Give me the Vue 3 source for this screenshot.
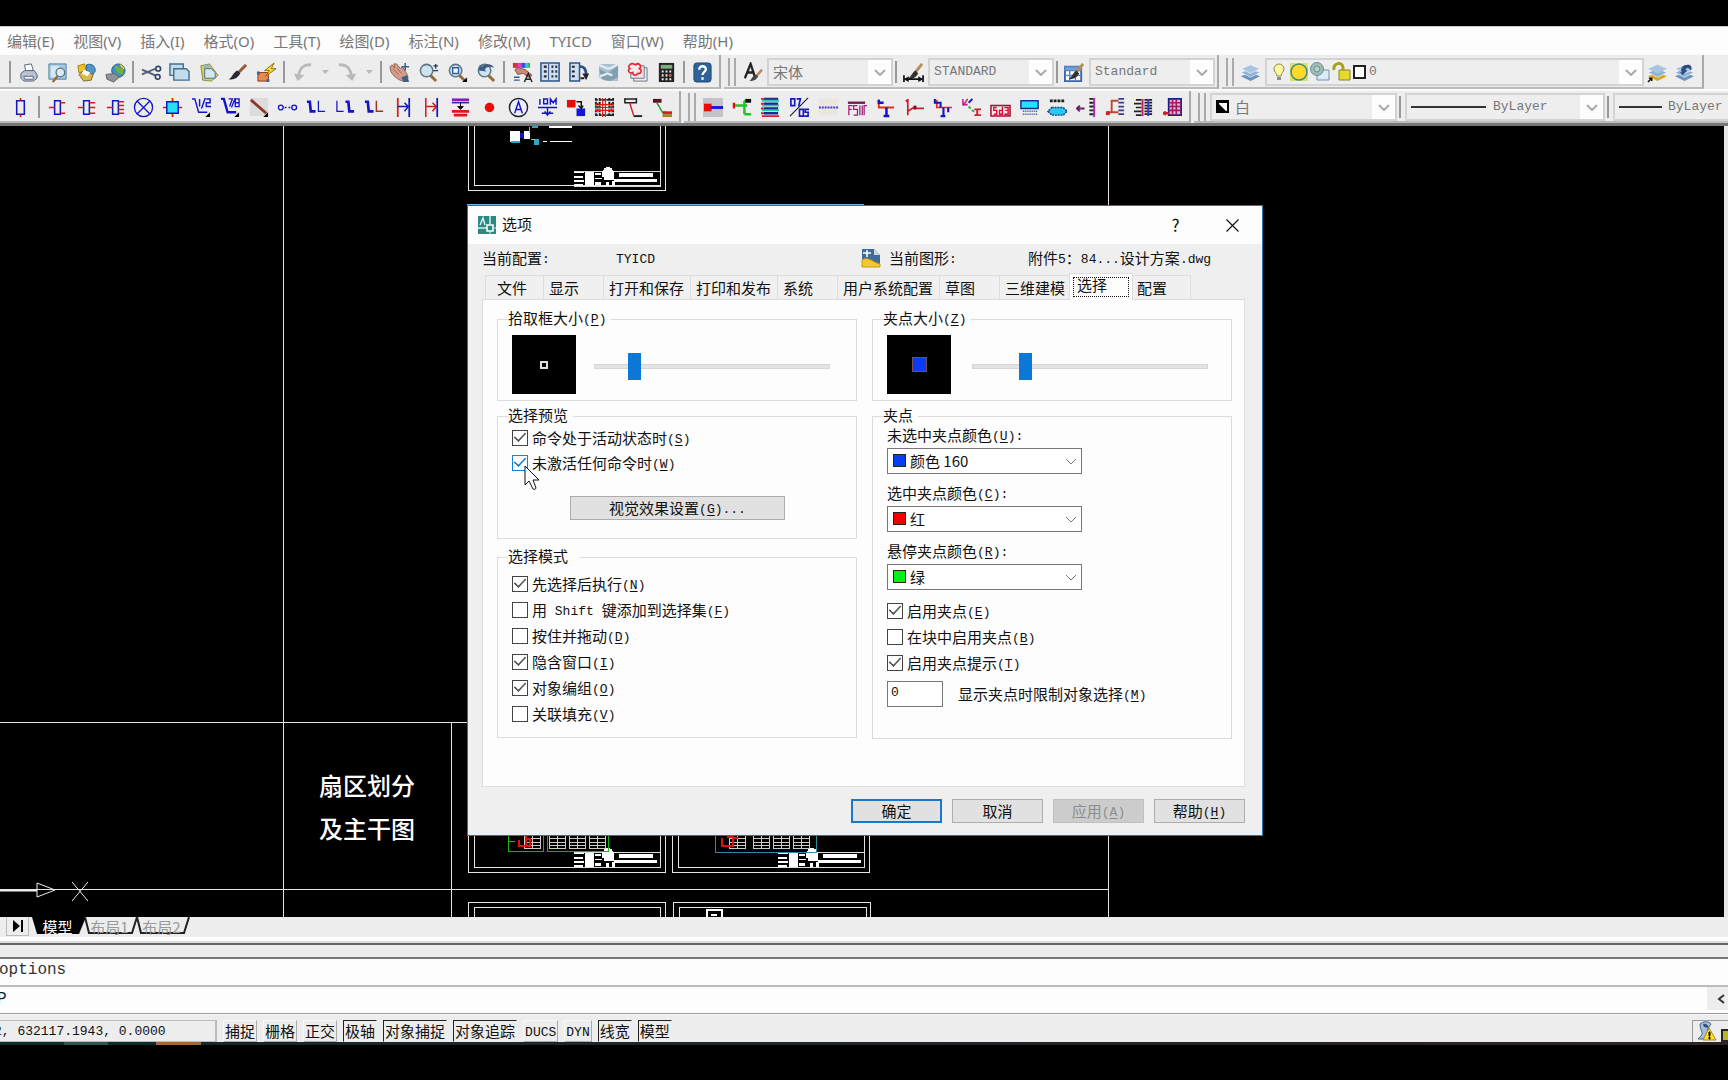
<script setup>
import { h, ref } from 'vue'

// Dialog captions mix full-width CJK with half-width Latin; "&" marks the access key.
const Mix = ({ text }) =>
  h('span', { class: 'mix' }, (text.match(/[\x20-\x7e]+|[^\x20-\x7e]+/g) || []).map(run => {
    if (!/^[\x20-\x7e]/.test(run)) return run
    const [before, after] = run.split('&')
    return h('span', { class: 'latin' }, after ? [before, h('u', after[0]), after.slice(1)] : before)
  }))
Mix.props = ['text']

const menus = ['编辑(E)', '视图(V)', '插入(I)', '格式(O)', '工具(T)', '绘图(D)', '标注(N)', '修改(M)', 'TYICD', '窗口(W)', '帮助(H)']

const magnifier = '<path d="M13 14l6 6" stroke="#9a6a35" stroke-width="3"/><circle cx="9" cy="9" r="6.5" fill="#cfe3ee" stroke="#5d7585" stroke-width="1.6"/>'
const layerStack = '<path d="M1 15l10-4 10 4-10 5z" fill="#6c93bd"/><path d="M1 11l10-4 10 4-10 5z" fill="#8fb2d4" stroke="#fff" stroke-width=".6"/><path d="M1 7l10-4 10 4-10 5z" fill="#a9c6e0" stroke="#fff" stroke-width=".6"/>'
const brush = '<path d="M20 2l-8 10" stroke="#b98a56" stroke-width="3"/><path d="M13 9l3 3c-3 5-7 6-11 6 3-2 4-6 8-9z" fill="#333"/>'
const B = '#1414c8'
const R = '#e01818'
const relay = n => `<path d="M8 4h6v14H8z" fill="none" stroke="${B}" stroke-width="1.6"/><path d="M2 11h6${n === 2 ? 'M14 6h5M14 17h5' : n === 3 ? 'M14 6h6M14 11h6M14 17h6' : 'M14 5h6M14 9h6M14 13h6M14 17h6'}" stroke="${R}" stroke-width="1.6"/>`

const icons = {
  print: '<path d="M7 3l7-1 2 7-8 1z" fill="#fff" stroke="#55637d"/><path d="M3 12l4-3h10l3 4v4l-4 3H6l-3-3z" fill="#b9c2d2" stroke="#55637d"/><path d="M6 15h10v3H7z" fill="#fff" stroke="#55637d"/>',
  preview: '<path d="M2 2h18v16H2z" fill="#a9c8df" stroke="#4d7ea5"/><path d="M4 4h9v12H4z" fill="#d6e8f2"/><path d="M11 15l-5 6" stroke="#9a6a35" stroke-width="2.4"/><circle cx="14" cy="11" r="4.5" fill="#d8ebf4" stroke="#5d7585" stroke-width="1.4"/>',
  publish: '<path d="M2 4l7-2 2 8-8 1z" fill="#f2c324" stroke="#a97d14"/><path d="M11 3c5-2 10 1 9 7l-4 5-5-4z" fill="#4c98c8" stroke="#2f628a"/><path d="M3 13l5-4 10 4-2 6-8 1z" fill="#d9b94b" stroke="#7a6a35"/><path d="M8 8l7 3-3 4-6-3z" fill="#fff"/>',
  web: '<circle cx="14" cy="9" r="7" fill="#3f8fc0" stroke="#2f628a"/><path d="M10 4c4 0 5 3 9 3v5c-4 2-8-1-9-8z" fill="#6cb33f"/><path d="M16 3l4 4" stroke="#f2c324" stroke-width="2"/><path d="M1 13l9-1 5 4-6 5-7-3z" fill="#8d9299" stroke="#666"/>',
  cut: '<path d="M1 13l14-6M1 8l14 6" stroke="#4d5c78" stroke-width="1.8"/><circle cx="18" cy="7" r="2.500" fill="none" stroke="#2f3e66" stroke-width="1.600"/><circle cx="17.500" cy="15.500" r="2.500" fill="none" stroke="#2f3e66" stroke-width="1.600"/>',
  copy: '<path d="M1 2h14v12H1z" fill="#c4dbea" stroke="#3f6f98" stroke-width="1.5"/><path d="M5 7h13l3 3v9H5z" fill="#c4dbea" stroke="#3f6f98" stroke-width="1.500"/>',
  paste: '<path d="M3 4l9-2 9 12-7 6-9-1z" fill="#e0cd4d" stroke="#8b8740"/><path d="M7 7h7l4 4v6H7z" fill="#d5e7f3" stroke="#3f6f98"/><path d="M6 3h6v3H6z" fill="#8db4d0"/>',
  brush: '<path d="M20 3l-9 9" stroke="#9a5c38" stroke-width="3"/><path d="M11 9l3 3c-3 5-7 7-12 6 4-2 4-7 9-9z" fill="#2a2a33"/>',
  match: '<path d="M2 11h11v9H2z" fill="#e88a4c" stroke="#8a3b1c"/><path d="M19 1L9 9h5l-4 6 11-8h-5z" fill="#ffdc3c" stroke="#8a6a10"/><path d="M1 10h3v3H1zM11 18h3v3h-3z" fill="#3e5f9a"/>',
  undo: '<path d="M20 3C12 2 8 7 7 14" fill="none" stroke="#b9b9b9" stroke-width="3"/><path d="M2 12l4 8 7-6z" fill="#b9b9b9"/>',
  redo: '<path d="M2 3c8-1 12 4 13 11" fill="none" stroke="#b9b9b9" stroke-width="3"/><path d="M20 12l-4 8-7-6z" fill="#b9b9b9"/>',
  hand: '<path d="M1 5l2-2 3 3-1-4 3 0 4 5 2-2 5 8 1 4-6 3C8 18 4 14 2 10z" fill="#d39c8b" stroke="#93604f"/><path d="M4 7l6 6M8 6l5 6" stroke="#93604f" stroke-width=".8"/><path d="M13 16l6-2 2 7h-6z" fill="#3e5f8a"/><path d="M17 1v8M13 5h8" stroke="#3e5f8a" stroke-width="1.600"/>',
  zoom: magnifier + '<path d="M16 4h5M18.500 2v5M16 9h5" stroke="#223d63" stroke-width="1.400"/>',
  zoomWindow: magnifier + '<path d="M6 6h6v6H6z" fill="#fff" stroke="#2c5f99" stroke-width="1.500"/><path d="M21 16v5h-5z"/>',
  zoomPrev: magnifier + '<path d="M3 9l1-6 2 2c5-4 11-3 13 1-5-2-8-1-10 2l2 2z" fill="#3d5b80"/>',
  props: '<path d="M1 1h18v5H1z" fill="#3bb54a"/><path d="M1 1h5v5H1z" fill="#e02a3a"/><path d="M6 1h4v5H6z" fill="#e33ad0"/><path d="M10 1h4v5h-4z" fill="#3450e0"/><path d="M14 1h3v5h-3z" fill="#39c6d2"/><path d="M3 8l3-2 8 2 7 6-4 2-5-4-6 1z" fill="#c98a7e" stroke="#8a4a42"/><path d="M2 16h6M2 19h6" stroke="#2f5c9b" stroke-width="1.500"/><path d="M13 21l4-9 4 9M14 18h5" stroke="#222" stroke-width="1.500" fill="none"/>',
  design: '<path d="M1 1h19v19H1z" fill="#cddff0" stroke="#2c5488" stroke-width="1.600"/><path d="M9 2v17" stroke="#2c5488"/><path d="M4 5h3M4 10h3M4 15h3M12 5h2M16 5h2M12 10h2M16 10h2M12 15h2M16 15h2" stroke="#333" stroke-width="2.500"/>',
  palettes: '<path d="M1 1h10v19H1z" fill="#cddff0" stroke="#2c5488" stroke-width="1.600"/><path d="M11 5c5-1 7 3 7 9" stroke="#2c5488" stroke-width="3" fill="none"/><path d="M14 12h7l-3 7z" fill="#223"/><path d="M3 5h3M3 10h3M3 15h3M12 17h4" stroke="#222" stroke-width="2"/>',
  sheet: '<path d="M1 2h20v18H8L1 16z" fill="#a9c2d2"/><path d="M1 7c6 3 8 6 13 2l7-5v12l-8 4-9-2z" fill="#7f9fb3"/><path d="M1 3l7 3c3 2 6 0 8-1l5-3M2 15l8-3 5 2" stroke="#dfeaf1" stroke-width="2.500" fill="none"/>',
  markup: '<path d="M7 6h14v14H7z" fill="#e8eef5" stroke="#6c7480"/><path d="M4 4h14v13H4z" fill="#f4e4e6" stroke="#6c7480"/><path d="M3 3c3-3 5 0 6 0 3-3 7 1 4 4 4 2 1 6-2 5-1 3-5 2-5-1-4 2-6-3-3-4-1-1-2-3 0-4z" fill="#fbe9ea" stroke="#e0283a" stroke-width="1.700"/>',
  calc: '<path d="M3 1h16v20H3z" fill="#222"/><path d="M5 3h12v4H5z" fill="#7fae7d"/><path d="M6 10h2M10 10h2M14 10h2M6 14h2M10 14h2M14 14h2M6 18h2M10 18h2M14 18h2" stroke="#f4e2e2" stroke-width="2.200"/><path d="M14 14h2" stroke="#e33" stroke-width="2.200"/>',
  help: '<rect x="2" y="1" width="18" height="20" rx="3" fill="#2f6299" stroke="#1f4677"/><path d="M7.500 8c0-5 7.500-4.500 7 0-.3 2.300-3.500 2.500-3.500 5.500M11 16v2.500" fill="none" stroke="#fff" stroke-width="2.400"/>',
  textStyle: '<path d="M3 17L9 2l5 15M5 11h8" fill="none" stroke="#222" stroke-width="2.400"/><path d="M21 8l-7 8" stroke="#b98a56" stroke-width="2.500"/><path d="M14 13l3 2c-2 4-5 5-9 5 2-2 3-5 6-7z" fill="#444"/>',
  dimStyle: brush + '<path d="M1 14v7M21 14v7M2 18h18" stroke="#111" stroke-width="1.800"/><path d="M1 18l5-3v6zM21 18l-5-3v6z" fill="#111"/>',
  tableStyle: '<path d="M1 5h17v15H1z" fill="#fff" stroke="#3a66a6" stroke-width="2"/><path d="M1 5h17v4H1zM6 9v11M12 9v11M1 14h17" fill="#7aa0d6" stroke="#5b86c4" stroke-width="1.500"/>' + brush,
  layers: layerStack,
  layerCurrent: '<path d="M1 15l10-4 10 4-10 5z" fill="#d4a92c"/><path d="M1 11l10-4 10 4-10 5z" fill="#8fb2d4" stroke="#fff" stroke-width=".6"/><path d="M1 7l10-4 10 4-10 5z" fill="#a9c6e0"/><path d="M1 21l4-4M2 17h3v3" stroke="#111" fill="none" stroke-width="1.500"/>',
  layerPrev: layerStack + '<path d="M8 11c-2-6 3-9 8-8 3 1 3 5 1 6 0-3-4-4-5-1l2 1-5 5-4-5z" fill="#2f4f80"/>',

  resistor: `<path d="M7 4h8v14H7z" fill="none" stroke="${B}" stroke-width="1.600"/><path d="M11 1v3M11 18v3" stroke="${R}" stroke-width="1.600"/>`,
  relay2: relay(2), relay3: relay(3), relay4: relay(4),
  lamp: `<circle cx="11" cy="11" r="9.500" fill="none" stroke="${B}" stroke-width="1.400"/><path d="M4.500 4.500l13 13M17.500 4.500l-13 13" stroke="${B}" stroke-width="1.400"/>`,
  node: `<path d="M11 1v20M1 11h20" stroke="${R}" stroke-width="1.800"/><path d="M5 5h12v12H5z" fill="#22e2f5" stroke="${B}" stroke-width="1.500"/>`,
  half: `<path d="M1 2h3l4 14h9" fill="none" stroke="${B}" stroke-width="1.500"/><path d="M9 2v8M15 1l-4 11M16 2h4v4h-4v4h5" fill="none" stroke="${B}" stroke-width="1.500"/><path d="M20 16v5h-5z"/>`,
  eighth: `<path d="M1 2h3l4 14h9" fill="none" stroke="${B}" stroke-width="2.500"/><path d="M9 2h4l-3 8M16 1l-4 10M16 2h4v8h-4zM16 6h4" fill="none" stroke="${B}" stroke-width="1.400"/><path d="M20 16v5h-5z"/>`,
  wire: '<path d="M1 1h19v19H1z" fill="#dcdcdc"/><path d="M2 3l16 14" stroke="#8a3a24" stroke-width="3"/><path d="M20 16v5h-5z"/>',
  link: `<circle cx="4" cy="11" r="2.500" fill="none" stroke="${B}" stroke-width="1.400"/><circle cx="18" cy="11" r="2.500" fill="none" stroke="${B}" stroke-width="1.400"/><path d="M8 11h2M12 11h2" stroke="${B}" stroke-width="1.400"/>`,
  ll1: `<path d="M1 5h3l1 10h5" fill="none" stroke="${B}" stroke-width="2.800"/><path d="M13 4v11h7" fill="none" stroke="${B}" stroke-width="1.300"/>`,
  ll2: `<path d="M2 4v11h7" fill="none" stroke="${B}" stroke-width="1.300"/><path d="M11 5h3l1 10h5" fill="none" stroke="${B}" stroke-width="2.800"/>`,
  ll3: `<path d="M1 5h3l1 10h5" fill="none" stroke="${B}" stroke-width="2.800"/><path d="M13 4v11h7" fill="none" stroke="#9a3a20" stroke-width="1.600"/>`,
  span1: `<path d="M5 1v20" stroke="${R}" stroke-width="1.800"/><path d="M17 1v20" stroke="${B}" stroke-width="1.800"/><path d="M5 10h11M12 6l4 4-4 5" stroke="${B}" stroke-width="1.500" fill="none"/>`,
  span2: `<path d="M5 1v20M5 10h11M12 6l4 4-4 5" stroke="${R}" stroke-width="1.600" fill="none"/><path d="M17 1v20" stroke="${B}" stroke-width="1.800"/>`,
  bars: `<path d="M2 3h18" stroke="#8a1fb0" stroke-width="3"/><path d="M2 6h18" stroke="#3a1fb0" stroke-width="1.500"/><path d="M2 15h18M4 19h14" stroke="${R}" stroke-width="3"/><path d="M11 6v6M8 10h6l-3 3z" stroke="#111" fill="#111"/>`,
  dot: '<circle cx="11" cy="11" r="5" fill="#f00808"/>',
  marker: `<circle cx="11" cy="11" r="9.500" fill="#eef" stroke="#222" stroke-width="1.500"/><path d="M7 17l4-12 4 12M8 13h6" fill="none" stroke="${B}" stroke-width="1.500"/>`,
  level: `<path d="M3 2v6M7 2h4v5H7zM14 8V2l3 4 3-4v6M1 11h20M5 17h12M11 11v8M8 15l3 4 3-4" fill="none" stroke="${B}" stroke-width="1.500"/>`,
  pair: `<path d="M1 3h9v8H1z" fill="#f00808"/><path d="M11 12h9v8h-9z" fill="#1414e0"/><path d="M11 5h5v6M13 9l3 3 2-3" stroke="#111" fill="none" stroke-width="1.500"/>`,
  mesh: '<path d="M2 1v20M6 1v20M16 1v20M20 1v20M1 3h20M1 19h20" stroke="#222" stroke-width="2" stroke-dasharray="3 1"/><path d="M9 1v20M12 1v20M1 11h20M1 8h20M1 14h20" stroke="#e01818" stroke-width="1.200"/><path d="M4 6v10M18 6v10" stroke="#222" stroke-width="1.200" stroke-dasharray="2 1"/>',
  drop: `<path d="M1 2h13M2 2v4h12V1" stroke="#222" stroke-width="1.600" fill="none"/><path d="M7 6l4 13" stroke="${R}" stroke-width="1.500"/><path d="M11 20h9" stroke="#222" stroke-width="2"/>`,
  slope: `<path d="M1 2h9v4H1z" fill="#5a1420"/><path d="M5 6l6 10h4" stroke="#2c9a35" stroke-width="1.600" fill="none"/><path d="M11 15h10v3H11z" fill="#c22"/><path d="M11 18h10v3H11z" fill="#9a8a20"/>`,

  stub: '<path d="M0 1h21v20H0z" fill="#c4c4c8"/><path d="M1 7h8v8H1z" fill="#f00808"/><path d="M8 11h13" stroke="#1414e0" stroke-width="3"/>',
  branch: '<path d="M3 9h13M13 4v14M13 4h7M13 18h7" stroke="#22c52c" stroke-width="2.600" fill="none"/><path d="M2 6v6" stroke="#f00808" stroke-width="2.400"/><path d="M14 2h6v4h-6z" fill="#111"/>',
  lines: '<path d="M4 2h15M4 7h15M4 12h15M4 17h15" stroke="#1a2a90" stroke-width="2.500"/><path d="M2 4h18M2 9h18M2 14h18" stroke="#25c6ac" stroke-width="2"/><path d="M1 2h3M1 7h3M1 12h3M1 17h3M2 20h18" stroke="#e01830" stroke-width="2"/>',
  fraction: `<path d="M2 2h4v7H2zM8 2h4l-2 8M11 13h4v7h-4zM21 13h-4v3h3v4h-4" fill="none" stroke="${B}" stroke-width="1.700"/><path d="M20 1L1 20" stroke="#222" stroke-width="1.200"/>`,
  dashes: '<path d="M1 2h20v17H1z" fill="#ebe6df"/><path d="M1 11h20" stroke="#3a3ad0" stroke-width="2" stroke-dasharray="2 1"/>',
  fsiif: '<path d="M2 6h18" stroke="#7a1a4a" stroke-width="2.500"/><path d="M3 19V9h4M3 13h3M12 9H8v4h4v6H8M14.500 9v10M17 9v10M19 19V9h3" fill="none" stroke="#a01a7a" stroke-width="1.300"/>',
  tee1: '<path d="M4 3v8h16" stroke="#e03018" stroke-width="2" fill="none"/><path d="M3 6h6M12 11v8M9 20h6M4 3v4" stroke="#1414c8" stroke-width="2.600" fill="none"/>',
  tee2: '<path d="M4 2v17M4 15l8-5M2 3l2 3M10 12h11" stroke="#d02028" stroke-width="1.800" fill="none"/><path d="M10 9h3v4h-3z" fill="#801028"/>',
  tee3: '<path d="M5 3v8h16" stroke="#e03018" stroke-width="1.800" fill="none"/><path d="M3 2v4h6v5M12 11v8M17 11v5M9 20h5" stroke="#1414c8" stroke-width="2.200" fill="none"/>',
  nodes: '<path d="M2 9l5-7M2 2v6h5" stroke="#c02080" stroke-width="1.600" fill="none"/><path d="M8 10l6 6" stroke="#2cab3a" stroke-width="2" stroke-dasharray="3 2"/><path d="M14 13h7M14 19h7M17 13v6" stroke="#d02028" stroke-width="2"/><path d="M12 2l-4 4" stroke="#1414c8" stroke-width="2"/>',
  sd: '<path d="M1 9h20v11H1z" fill="#fde7ea" stroke="#a0103a" stroke-width="1.600"/><path d="M7 11H4v3h3v4H4M13 10v8h-3v-4h3M15 11h4v7h-4M16 14h3" fill="none" stroke="#d01030" stroke-width="1.500"/>',
  screen: '<path d="M2 4h18v8H2z" fill="#22e2f5" stroke="#1a2a90" stroke-width="1.500"/><path d="M4 15h15M4 18h15" stroke="#3344a0" stroke-width="1.500" stroke-dasharray="1 1"/>',
  cable: '<path d="M3 4h16" stroke="#222" stroke-width="3" stroke-dasharray="3 1"/><path d="M5 11h12l4 4-4 4H5l-4-4z" fill="#2cc8ee" stroke="#1a3a90" stroke-width="1.500" stroke-dasharray="2 1"/>',
  splitter: '<path d="M1 12h8M4 9l-3 3 3 3" stroke="#701a70" stroke-width="2" fill="none"/><path d="M14 2h6M14 6h6M14 10h6M14 14h6M14 18h6" stroke="#222" stroke-width="2"/><path d="M19 1v20" stroke="#b02ab0" stroke-width="2"/>',
  ladder: '<path d="M2 16h5V4h7M8 16h6" stroke="#c04a28" stroke-width="2" fill="none"/><path d="M1 15h4v4H1z" fill="#d02028"/><path d="M14 2h6M14 6h6M14 10h6M14 14h6M14 18h6" stroke="#3a3a9a" stroke-width="1.800"/>',
  rack: '<path d="M3 3h6M1 7h8M3 11h6M1 15h8M3 19h6M12 3h8M12 6h8M12 9h8M12 12h8M12 15h8M12 18h8" stroke="#222" stroke-width="1.800"/><path d="M10 2v18" stroke="#c02060" stroke-width="2"/><path d="M16 2v18" stroke="#3a3ac8" stroke-width="2"/>',
  grid: '<path d="M7 2h13v17H7z" fill="#e8b0cc" stroke="#1a1a90" stroke-width="1.800"/><path d="M11 2v17M15 2v17M7 6h13M7 10h13M7 14h13" stroke="#a01a60" stroke-width="1.600"/><path d="M1 17h6M3 15v4" stroke="#d02028" stroke-width="2.500"/>'
}

const standardTools = ['print', 'preview', 'publish', 'web', '|', 'cut', 'copy', 'paste', 'brush', 'match', '|', 'undo', 'v', 'redo', 'v', '|', 'hand', 'zoom', 'zoomWindow', 'zoomPrev', '|', 'props', 'design', 'palettes', 'sheet', 'markup', 'calc', '|', 'help']
const symbolTools = ['relay2', 'relay3', 'relay4', 'lamp', 'node', 'half', 'eighth', 'wire', 'link', 'll1', 'll2', 'll3', 'span1', 'span2', 'bars', 'dot', 'marker', 'level', 'pair', 'mesh', 'drop', 'slope']
const cableTools = ['stub', 'branch', 'lines', 'fraction', 'dashes', 'fsiif', 'tee1', 'tee2', 'tee3', 'nodes', 'sd', 'screen', 'cable', 'splitter', 'ladder', 'rack', 'grid']

const styleCombos = [
  { icon: 'textStyle', value: '宋体' },
  { icon: 'dimStyle', value: 'STANDARD' },
  { icon: 'tableStyle', value: 'Standard' }
]

const tabs = ['文件', '显示', '打开和保存', '打印和发布', '系统', '用户系统配置', '草图', '三维建模', '选择', '配置']
const activeTab = ref('选择')

const pickbox = ref(15)
const gripSize = ref(21)

const previewChecks = ref([
  { text: '命令处于活动状态时(&S)', on: true },
  { text: '未激活任何命令时(&W)', on: true, hot: true }
])
const modeChecks = ref([
  { text: '先选择后执行(&N)', on: true },
  { text: '用 Shift 键添加到选择集(&F)', on: false },
  { text: '按住并拖动(&D)', on: false },
  { text: '隐含窗口(&I)', on: true },
  { text: '对象编组(&O)', on: true },
  { text: '关联填充(&V)', on: false }
])
const gripChecks = ref([
  { text: '启用夹点(&E)', on: true },
  { text: '在块中启用夹点(&B)', on: false },
  { text: '启用夹点提示(&T)', on: true }
])
const gripColors = [
  { id: 'grip-idle', label: '未选中夹点颜色(&U):', value: '颜色 160', color: '#0a3cf0' },
  { id: 'grip-selected', label: '选中夹点颜色(&C):', value: '红', color: '#f20000' },
  { id: 'grip-hover', label: '悬停夹点颜色(&R):', value: '绿', color: '#00f01c' }
]
const gripLimit = ref('0')
const command = ref('P')

const modes = [
  ['捕捉', false], ['栅格', false], ['正交', false], ['极轴', true], ['对象捕捉', true],
  ['对象追踪', true], ['DUCS', false], ['DYN', false], ['线宽', true], ['模型', true]
]
</script>

<template>
  <div class="app">
    <nav class="menubar">
      <button v-for="m in menus" :key="m">{{ m }}</button>
    </nav>

    <div class="toolrow">
      <div class="toolbar first">
        <i class="sep"></i>
        <div class="icons standard">
          <template v-for="(t, i) in standardTools" :key="i">
            <i v-if="t === '|'" class="sep"></i>
            <button v-else-if="t === 'v'" class="drop" aria-label="展开"><svg width="7" height="4"><path d="M0 0h7L3 4z" fill="#b9b9b9" /></svg></button>
            <button v-else class="tool" :aria-label="t"><svg viewBox="0 0 22 22" v-html="icons[t]"></svg></button>
          </template>
        </div>
      </div>
      <div class="toolbar">
        <i class="grip"></i>
        <template v-for="(c, i) in styleCombos" :key="c.icon">
          <i v-if="i" class="sep"></i>
          <button class="tool fixed" :aria-label="c.icon"><svg viewBox="0 0 22 22" v-html="icons[c.icon]"></svg></button>
          <span class="tcombo">
            <select :aria-label="c.icon + ' list'" :class="{ cjk: c.value === '宋体' }"><option>{{ c.value }}</option></select>
            <svg class="chev" width="12" height="7"><path d="M1 1l5 5 5-5" /></svg>
          </span>
        </template>
      </div>
      <div class="toolbar grow">
        <i class="grip"></i>
        <button class="tool fixed" aria-label="layers"><svg viewBox="0 0 22 22" v-html="icons.layers"></svg></button>
        <span class="tcombo grow">
          <select class="layer-select" aria-label="图层"><option>0</option></select>
          <svg class="lead" width="96" height="20" viewBox="0 0 96 20">
            <path d="M3 7a5 5 0 1110 0c0 3-3 4-3 7H6c0-3-3-4-3-7z" fill="#fff6a0" stroke="#8a8a50" /><path d="M6 15h4v3H6z" fill="#8a8f98" />
            <path d="M19 1h18v18H19z" fill="#d8e070" /><circle cx="28" cy="10" r="8" fill="#ffd92c" stroke="#3c8c78" stroke-width="1.500" />
            <path d="M46 8h12v10H46z" fill="#dcebf5" stroke="#6f93b5" /><circle cx="46" cy="7" r="6.500" fill="#9fbcae" stroke="#6f8fa5" /><circle cx="46" cy="7" r="3" fill="#b9cfc4" stroke="#6f8fa5" />
            <path d="M63 8c-1-7 8-9 9-3v4" fill="none" stroke="#a3a31c" stroke-width="3" /><path d="M68 8h11v10H68z" fill="#e6d92c" stroke="#86861c" />
            <path d="M83 4h11v12H83z" fill="#fff" stroke="#222" stroke-width="2" />
          </svg>
          <svg class="chev" width="12" height="7"><path d="M1 1l5 5 5-5" /></svg>
        </span>
        <button class="tool fixed" aria-label="layer current"><svg viewBox="0 0 22 22" v-html="icons.layerCurrent"></svg></button>
        <button class="tool fixed" aria-label="layer previous"><svg viewBox="0 0 22 22" v-html="icons.layerPrev"></svg></button>
      </div>
    </div>

    <div class="toolrow second">
      <div class="toolbar">
        <button class="tool lone" aria-label="resistor"><svg viewBox="0 0 22 22" v-html="icons.resistor"></svg></button>
        <i class="sep"></i>
        <div class="icons symbols">
          <button v-for="t in symbolTools" :key="t" class="tool" :aria-label="t"><svg viewBox="0 0 22 22" v-html="icons[t]"></svg></button>
        </div>
      </div>
      <div class="toolbar">
        <i class="grip"></i>
        <div class="icons cables">
          <button v-for="t in cableTools" :key="t" class="tool" :aria-label="t"><svg viewBox="0 0 22 22" v-html="icons[t]"></svg></button>
        </div>
      </div>
      <div class="toolbar last">
        <i class="grip"></i>
        <span class="tcombo color">
          <select class="cjk" aria-label="颜色"><option>白</option></select>
          <svg class="lead" width="13" height="13"><path d="M0 0h13v13H0z" /><path d="M3 3v1l7 7h1V3z" fill="#fff" /></svg>
          <svg class="chev" width="12" height="7"><path d="M1 1l5 5 5-5" /></svg>
        </span>
        <i class="sep"></i>
        <span class="tcombo ltype">
          <select aria-label="线型"><option>ByLayer</option></select>
          <svg class="lead" width="75" height="2"><path d="M0 0h75v2H0z" fill="#333" /></svg>
          <svg class="chev" width="12" height="7"><path d="M1 1l5 5 5-5" /></svg>
        </span>
        <i class="sep"></i>
        <span class="tcombo lweight">
          <select aria-label="线宽"><option>ByLayer</option></select>
          <svg class="lead" width="43" height="2"><path d="M0 0h43v2H0z" fill="#333" /></svg>
        </span>
      </div>
    </div>

    <main class="workspace">
      <svg class="drawing" shape-rendering="crispEdges">
        <defs>
          <g id="title-block">
            <path d="M0 0h87M0 15h87" stroke="#ddd" />
            <path d="M0 1h10v1H0zM0 5h9v2H0zM0 9h10v2H0zM0 13h9v2H0zM11 1h9v14h-9zM21 2h6v2h-6zM21 7h7v1h-7zM21 11h6v3h-6zM28 0h12v6H28zM30 6h10v3H30zM32 11h3v4h-3zM38 10h3v5h-3zM45 2h34v4H45zM40 8h43v3H40z" fill="#fff" />
            <circle cx="34" cy="1" r="5" fill="#fff" />
          </g>
          <g id="schedule" stroke="#ccc" fill="none"><path d="M0 0h16v14H0zM0 4h16M0 8h16M0 11h16M8 0v14" /></g>
        </defs>
        <g transform="translate(0 -126)">
          <g stroke="#e4e4e4" fill="none">
            <path d="M283.500 126v800M0 722.500h468M451.500 722v204M0 889.500h1108M1108.500 126v800" />
            <path d="M468.500 126v64.500h197V126M474.500 126v59.500h186V126" />
            <path d="M468.500 800v72.500h197V800M474.500 800v67.500h186V800M672.500 800v72.500h197V800M678.500 800v67.500h186V800" />
            <path d="M468.500 926v-23.500h197V926M474.500 926v-18.500h186V926M673.500 926v-23.500h197V926M679.500 926v-18.500h187V926" />
            <path d="M706.500 926v-16.500h15V926M711 914.500h6" stroke="#fff" stroke-width="2" />
          </g>
          <path d="M467 204h397" stroke="#62b6e8" />
          <path d="M510 131h10v11h-10zM524 131h6v8h-6zM549 126h23v2h-23zM550 141h22v1h-22zM543 141h4v1h-4z" fill="#fff" />
          <path d="M511 141h9v2h-9zM532 126h6v2h-6zM534 139h5v6h-5z" fill="#2aa6c8" />
          <path d="M520 133h4v5h-4z" fill="#1414c8" />
          <path d="M529.500 127v6M531 139.500h4" stroke="#7fc890" />
          <use href="#title-block" x="574" y="171" />
          <use href="#title-block" x="574" y="852" />
          <use href="#title-block" x="778" y="852" />
          <g transform="translate(0 834)">
            <use href="#schedule" x="524" /><use href="#schedule" x="549" /><use href="#schedule" x="569" /><use href="#schedule" x="589" />
            <use href="#schedule" x="729" /><use href="#schedule" x="753" /><use href="#schedule" x="773" /><use href="#schedule" x="793" />
          </g>
          <path d="M508.500 834v17.500h35V834M547.500 834v17.500h61V834M509 841.500h6" stroke="#10b810" fill="none" />
          <path d="M715.500 834v18.500h101V834" stroke="#2f8c9c" fill="none" />
          <path d="M519 840v6h11v-7h-5M526 836v10M722 838v8h11v-9h-6M733 838h5" stroke="#e01010" stroke-width="2" fill="none" />
          <g stroke="#eee" fill="none" shape-rendering="auto"><path d="M0 890.500h37" stroke-width="2" /><path d="M37 883v14l18-7zM72 882l16 19M88 882l-16 19" /></g>
          <text x="319" y="795">扇区划分</text>
          <text x="319" y="838">及主干图</text>
        </g>
      </svg>

      <section class="dialog" role="dialog" aria-labelledby="dlg-title">
        <header class="titlebar">
          <svg class="app-icon" width="18" height="18"><path d="M0 0h18v18H0z" fill="#2a8a80" /><path d="M2 9l3-7 2 7M12 0v8M0 12h9" stroke="#d8f0ec" stroke-width="1.500" fill="none" /><path d="M9 9h6v6H9z" fill="#2a8a80" stroke="#fff" stroke-width="1.500" /><path d="M15 12h3M12 15v3" stroke="#d8f0ec" /></svg>
          <h1 id="dlg-title">选项</h1>
          <button class="caption" aria-label="帮助">?</button>
          <button class="caption" aria-label="关闭"><svg width="13" height="13"><path d="M.5.5l12 12M12.500.5l-12 12" stroke="#111" stroke-width="1.200" /></svg></button>
        </header>

        <div class="body">
          <div class="info">
            <span class="info-label"><Mix text="当前配置:" /></span>
            <span class="profile"><Mix text="TYICD" /></span>
            <svg width="20" height="20"><path d="M1 1h12l6 6v12H1z" fill="#3f6d98" /><path d="M1 12c6-4 10 2 18 4v3H1z" fill="#f2c82c" stroke="#c79a1c" /><path d="M6 2v7M2 5h8" stroke="#fff" stroke-width="1.500" /><path d="M13 1v6h6z" fill="#c8d8e4" /></svg>
            <span class="drawing-label"><Mix text="当前图形:" /></span>
            <span><Mix text="附件5：84...设计方案.dwg" /></span>
          </div>

          <div class="tabs" role="tablist">
            <button v-for="t in tabs" :key="t" role="tab" :aria-selected="t === activeTab" :class="{ active: t === activeTab }" @click="activeTab = t"><span>{{ t }}</span></button>
          </div>

          <div class="panel">
            <div class="column">
              <fieldset class="size-group">
                <legend><Mix text="拾取框大小(&P)" /></legend>
                <div class="size-row left">
                  <div class="swatch-box"><i class="pick"></i></div>
                  <input v-model="pickbox" type="range" min="0" max="100" aria-label="拾取框大小">
                </div>
              </fieldset>
              <fieldset class="preview-group">
                <legend>选择预览</legend>
                <label v-for="c in previewChecks" :key="c.text" class="check"><input v-model="c.on" type="checkbox" :class="{ hot: c.hot }"><Mix :text="c.text" /></label>
                <button class="push wide"><Mix text="视觉效果设置(&G)..." /></button>
              </fieldset>
              <fieldset class="mode-group">
                <legend class="long">选择模式</legend>
                <label v-for="c in modeChecks" :key="c.text" class="check tall"><input v-model="c.on" type="checkbox"><Mix :text="c.text" /></label>
              </fieldset>
            </div>
            <div class="column">
              <fieldset class="size-group">
                <legend><Mix text="夹点大小(&Z)" /></legend>
                <div class="size-row right">
                  <div class="swatch-box"><i class="gripdot"></i></div>
                  <input v-model="gripSize" type="range" min="0" max="100" aria-label="夹点大小">
                </div>
              </fieldset>
              <fieldset class="grip-group">
                <legend>夹点</legend>
                <div class="colors">
                  <div v-for="g in gripColors" :key="g.id" class="field">
                    <label :for="g.id"><Mix :text="g.label" /></label>
                    <span class="combo">
                      <select :id="g.id"><option>{{ g.value }}</option></select>
                      <i class="chip" :style="{ background: g.color }"></i>
                      <svg class="chev" width="12" height="7"><path d="M1 1l5 5 5-5" /></svg>
                    </span>
                  </div>
                </div>
                <label v-for="c in gripChecks" :key="c.text" class="check tall"><input v-model="c.on" type="checkbox"><Mix :text="c.text" /></label>
                <div class="limit">
                  <input id="grip-limit" v-model="gripLimit" type="text">
                  <label for="grip-limit"><Mix text="显示夹点时限制对象选择(&M)" /></label>
                </div>
              </fieldset>
            </div>
          </div>

          <footer class="actions">
            <button class="push default">确定</button>
            <button class="push">取消</button>
            <button class="push" disabled><Mix text="应用(&A)" /></button>
            <button class="push"><Mix text="帮助(&H)" /></button>
          </footer>
        </div>

        <svg class="pointer" width="17" height="26"><path d="M1 1v19l4-4 4 8c1 1 3 0 3-1l-3-8h6z" fill="#fff" stroke="#111" /></svg>
      </section>
    </main>

    <div class="sheets">
      <button class="step" aria-label="最后一个"><svg width="10" height="12"><path d="M0 0l7 6-7 6zM8 0h2v12H8z" /></svg></button>
      <button class="sheet current"><svg viewBox="0 0 54 18"><path d="M0 0h54l-7 17H5z" fill="#000" /></svg><span>模型</span></button>
      <button class="sheet"><svg viewBox="0 0 54 18"><path d="M1 0l4 16h43l5-16" fill="none" stroke="#222" stroke-width="2" /></svg><span>布局1</span></button>
      <button class="sheet"><svg viewBox="0 0 54 18"><path d="M1 0l4 16h43l5-16" fill="none" stroke="#222" stroke-width="2" /></svg><span>布局2</span></button>
    </div>
    <div class="splitter"></div>
    <div class="history">options</div>
    <div class="prompt">
      <input v-model="command" type="text" aria-label="命令">
      <button aria-label="向左滚动"><svg width="8" height="10"><path d="M7 1L2 5l5 4" fill="none" stroke="#333" stroke-width="2" /></svg></button>
    </div>
    <footer class="status">
      <output class="coords">2, 632117.1943, 0.0000</output>
      <button v-for="[name, on] in modes" :key="name" class="mode" :class="{ on }" :aria-pressed="on"><Mix :text="name" /></button>
      <div class="tray">
        <svg width="31" height="21"><path d="M3 3c3-3 9-3 11 0l-4 6 5 6-7 3H1l3-3C7 12 3 9 3 3z" fill="#a8bfd8" stroke="#4a6488" /><path d="M6 3c3-1 5 1 6 4L7 6z" fill="#2f4f80" /><path d="M12 7l7 12H6z" fill="#ffe02c" stroke="#a88a10" /><path d="M12 11h1v4h-1zM12 16h1v2h-1z" stroke="#111" /><path d="M25 9h8v11h-8z" fill="#b8b820" stroke="#222" stroke-width="2" /></svg>
      </div>
    </footer>
    <div class="taskbar"></div>
  </div>
</template>

<style>
body { background: #000; }
.mix { white-space: pre; }
.mix .latin { font-family: "Liberation Mono", monospace; font-size: 13px; line-height: 1; vertical-align: 1px; }
.mix u { text-underline-offset: 2px; }
</style>

<style scoped>
.app {
  display: flex;
  flex-direction: column;
  min-height: 100vh;
  box-sizing: border-box;
  padding: 26px 0 35px;
  overflow: hidden;
  background: #000;
  color: #111;
  font: 15px/20px "Noto Sans CJK SC", sans-serif;
}
.app *, .app *::before { box-sizing: border-box; }
button, input, select { margin: 0; padding: 0; border: 0; border-radius: 0; background: none; color: inherit; font: inherit; }
svg { display: block; flex: none; }

.menubar {
  display: flex;
  align-items: center;
  gap: 19px;
  height: 28px;
  padding: 0 7px;
  background: #fdfdfd;
  border-top: 1px solid #ccc;
  color: #777;
  font-family: "Noto Sans", "Noto Sans CJK SC", sans-serif;
  font-size: 15px;
}
.menubar button { white-space: nowrap; }

.toolrow { display: flex; height: 35px; background: #ededed; border-top: 1px solid #fafafa; overflow: hidden; }
.toolrow.second { height: 37px; border-top: 2px solid #fcfcfc; border-bottom: 3px solid #777; }
.toolbar { display: flex; align-items: center; flex: none; padding: 2px 2px 0 4px; border-right: 2px solid #aaa; border-bottom: 2px solid #bbb; margin-right: 3px; }
.toolbar.first { padding-left: 7px; }
.toolbar.grow { flex: 1; margin-right: 24px; padding-right: 4px; }
.toolbar.last { flex: 1; margin: 0; padding-right: 0; border-right: 0; min-width: 0; }
.icons { display: flex; align-items: center; }
.standard { width: 703px; }
.symbols { width: 634px; }
.cables { width: 488px; }
.tool { display: flex; justify-content: center; align-items: center; flex: 1; min-width: 0; height: 28px; }
.tool svg { width: 21px; height: 21px; }
.tool.fixed { flex: none; width: 27px; }
.tool.lone { flex: none; width: 32px; }
.drop { display: flex; justify-content: center; align-items: center; flex: none; width: 16px; height: 28px; }
.sep { flex: none; width: 2px; height: 22px; margin: 0 3px 0 2px; background: #999; }
.grip { flex: none; width: 8px; height: 28px; margin-right: 3px; border: solid #aaa; border-width: 0 2px; }
.tcombo { position: relative; display: block; flex: none; width: 126px; height: 28px; margin-left: 1px; }
.tcombo.grow { flex: 1; }
.tcombo select { appearance: none; width: 100%; height: 28px; padding-left: 4px; border: 2px solid #d3d3d3; background: linear-gradient(#fdfdfd, #fdfdfd) right / 23px 100% no-repeat #eee; color: #777; font-family: "Liberation Mono", monospace; font-size: 13px; }
.tcombo select.cjk { font-family: "Noto Sans CJK SC", sans-serif; font-size: 15px; }
.tcombo .layer-select { padding-left: 102px; }
.tcombo .chev { position: absolute; right: 7px; top: 11px; }
.chev path { fill: none; stroke: #aaa; stroke-width: 2; }
.lead { position: absolute; left: 6px; top: 4px; }
.color { width: 187px; }
.tcombo.color select { padding-left: 23px; }
.color .lead { top: 7px; }
.ltype { width: 200px; }
.tcombo.ltype select { padding-left: 86px; }
.lweight { flex: 1; min-width: 100px; }
.tcombo.lweight select { padding-left: 53px; background: #eee; border-right: 0; }
.ltype .lead, .lweight .lead { top: 13px; }

.workspace { position: relative; flex: 1; min-height: 720px; margin-right: 4px; background: #000; box-shadow: 4px 0 #e8e8e8; }
.drawing { position: absolute; inset: 0; width: 100%; height: 100%; }
.drawing text { fill: #fff; font: 500 24px "Noto Sans CJK SC", sans-serif; }

.dialog { position: absolute; left: 467px; top: 79px; width: 796px; border: 1px solid #2272b4; background: #efefef; }
.titlebar { display: flex; align-items: center; height: 38px; padding-left: 10px; background: #fdfdfd; }
.titlebar h1 { flex: 1; margin: 0 0 2px 6px; font-size: 15px; font-weight: 400; }
.caption { display: flex; justify-content: center; align-items: center; width: 57px; height: 36px; font-size: 17px; }
.titlebar .caption:last-child { margin-right: 1px; }
.body { padding: 0 17px 12px 14px; }
.info { display: flex; align-items: center; height: 29px; padding-bottom: 1px; }
.info-label { width: 134px; }
.profile { width: 245px; }
.drawing-label { width: 139px; margin-left: 8px; }
.tabs { display: flex; align-items: flex-end; height: 26px; padding-left: 3px; }
.tabs button { flex: none; min-width: 60px; height: 24px; padding: 0 6px 0 5px; border: 1px solid #ddd; border-width: 1px 0 0 1px; background: #f0f0f0; text-align: left; white-space: nowrap; }
.tabs button:first-child { min-width: 58px; padding-left: 11px; }
.tabs button:last-child { border-right-width: 1px; }
.tabs button.active { position: relative; width: 64px; height: 27px; margin: 0 -2px -1px; padding: 3px; border-width: 1px 1px 0; background: #fdfdfd; }
.tabs button.active span { display: block; height: 20px; padding-left: 3px; border: 1px dotted #111; line-height: 14px; }
.panel { display: flex; gap: 15px; padding: 10px 12px 47px 14px; border: 1px solid #ddd; background: #fdfdfd; }
.column { flex: 1; min-width: 0; }
fieldset { min-width: 0; margin: 0; padding: 0 14px; border: 1px solid #dcdcdc; }
legend { margin-left: -4px; padding: 0 5px 2px 0; line-height: 16px; background: #fdfdfd; }
legend.long { padding-right: 12px; }
.size-group { padding-top: 7px; padding-bottom: 6px; }
.preview-group { margin-top: 6px; padding-bottom: 18px; }
.mode-group { margin-top: 9px; padding-top: 5px; padding-bottom: 10px; }
.grip-group { margin-top: 6px; padding-bottom: 31px; }
.size-row { display: flex; align-items: center; gap: 18px; height: 59px; }
.size-row.right { gap: 21px; }
.swatch-box { display: flex; justify-content: center; align-items: center; width: 64px; height: 59px; background: #000; }
.pick { width: 8px; height: 8px; border: 2px solid #ddd; }
.gripdot { width: 15px; height: 15px; border: 1px solid #7a5050; background: #0a3cf8; }
input[type="range"] { appearance: none; width: 236px; height: 27px; margin-top: 4px; }
input[type="range"]::-webkit-slider-runnable-track { height: 5px; background: #e4e4e4; border: 1px solid #d6d6d6; }
input[type="range"]::-webkit-slider-thumb { appearance: none; width: 13px; height: 27px; margin-top: -12px; background: #0a78d6; }
.check { display: flex; align-items: center; gap: 4px; height: 25px; }
.check.tall { height: 26px; }
input[type="checkbox"] { appearance: none; flex: none; width: 16px; height: 16px; border: 1px solid #444; background: #fff; }
input[type="checkbox"]:checked::before { content: ""; display: block; width: 12px; height: 7px; margin: 1px; border: solid #555; border-width: 0 0 2px 2px; transform: rotate(-47deg); clip-path: polygon(0 0, 2px 0, 2px 5px, 12px 5px, 12px 7px, 0 7px); }
input[type="checkbox"].hot { border-color: #1a80d0; }
input[type="checkbox"].hot:checked::before { border-color: #1a80d0; }
.push { height: 24px; border: 1px solid #adadad; background: #e1e1e1; text-align: center; line-height: 20px; }
.push.wide { display: block; width: 215px; margin: 21px 0 0 58px; }
.push.default { border: 2px solid #1a78c8; }
.push:disabled { background: #cccccc; border-color: #c0c0c0; color: #8c8c8c; }
.colors { display: flex; flex-direction: column; gap: 9px; margin-bottom: 8px; }
.field label { display: block; height: 20px; margin-bottom: 3px; }
.combo { position: relative; display: block; width: 195px; }
.combo select { display: block; appearance: none; width: 100%; height: 26px; padding-left: 22px; border: 1px solid #777; background: #fff; }
.combo .chip { position: absolute; left: 6px; top: 6px; width: 13px; height: 13px; border: 1px solid #222; }
.combo .chev { position: absolute; right: 5px; top: 10px; }
.combo .chev path { stroke: #777; stroke-width: 1; }
.limit { display: flex; align-items: center; gap: 15px; margin-top: 5px; }
.limit input { width: 56px; height: 26px; padding: 0 3px 3px; border: 1px solid #777; background: #fff; font-family: "Liberation Mono", monospace; font-size: 13px; }
.actions { display: flex; justify-content: flex-end; gap: 10px; margin-top: 12px; }
.actions .push { width: 91px; }
.pointer { position: absolute; left: 56px; top: 259px; }

.sheets { display: flex; height: 20px; padding-left: 6px; background: #ededed; }
.step { display: flex; justify-content: center; align-items: center; width: 23px; height: 19px; margin-right: 3px; border: solid #bbb; border-width: 0 1px 1px; }
.sheet { position: relative; width: 54px; height: 18px; margin-right: -2px; padding-right: 3px; color: #999; }
.sheet svg { position: absolute; inset: 0; width: 54px; height: 18px; }
.sheet span { position: relative; display: block; line-height: 15px; }
.sheet.current { color: #fff; }
.splitter { height: 22px; background: linear-gradient(#fdfdfd 0 4px, #ddd 4px 6px, #666 6px 8px, #ededed 8px 20px, #777 20px 22px); }
.history { height: 28px; padding-top: 1px; background: #fdfdfd; border-bottom: 2px solid #bbb; font: 16px/20px "Liberation Mono", monospace; color: #333; text-indent: -1px; }
.prompt { display: flex; height: 27px; background: #fdfdfd; border-bottom: 1px solid #999; }
.prompt input { flex: 1; height: 24px; min-width: 0; margin-left: -3px; font: 16px/20px "Liberation Mono", monospace; color: #123; }
.prompt button { display: flex; align-items: center; justify-content: flex-end; width: 21px; height: 23px; padding-right: 3px; background: #ededed; }
.status { display: flex; align-items: flex-start; gap: 6px; height: 28px; padding-top: 5px; background: #ededed; border-top: 1px solid #fafafa; }
.coords { flex: none; width: 223px; height: 22px; margin-left: -6px; border: 1px solid #bbb; border-width: 1px 2px 1px 0; font: 13px/22px "Liberation Mono", monospace; white-space: pre; }
.mode { height: 22px; padding: 1px; border: 1px solid; border-color: #f8f8f8 #aaa #aaa #f8f8f8; line-height: 18px; white-space: nowrap; }
.mode.on { border-color: #222 #eee #eee #222; }
.tray { height: 22px; margin-left: auto; padding-left: 4px; border: solid #999; border-width: 1px 0 0 1px; }
.taskbar { height: 3px; background: linear-gradient(90deg, #0c2c2a 64px, #2f5552 64px 108px, #0c2c2a 108px 156px, #a06a3c 156px 201px, #15272a 201px, #302225); }
</style>
